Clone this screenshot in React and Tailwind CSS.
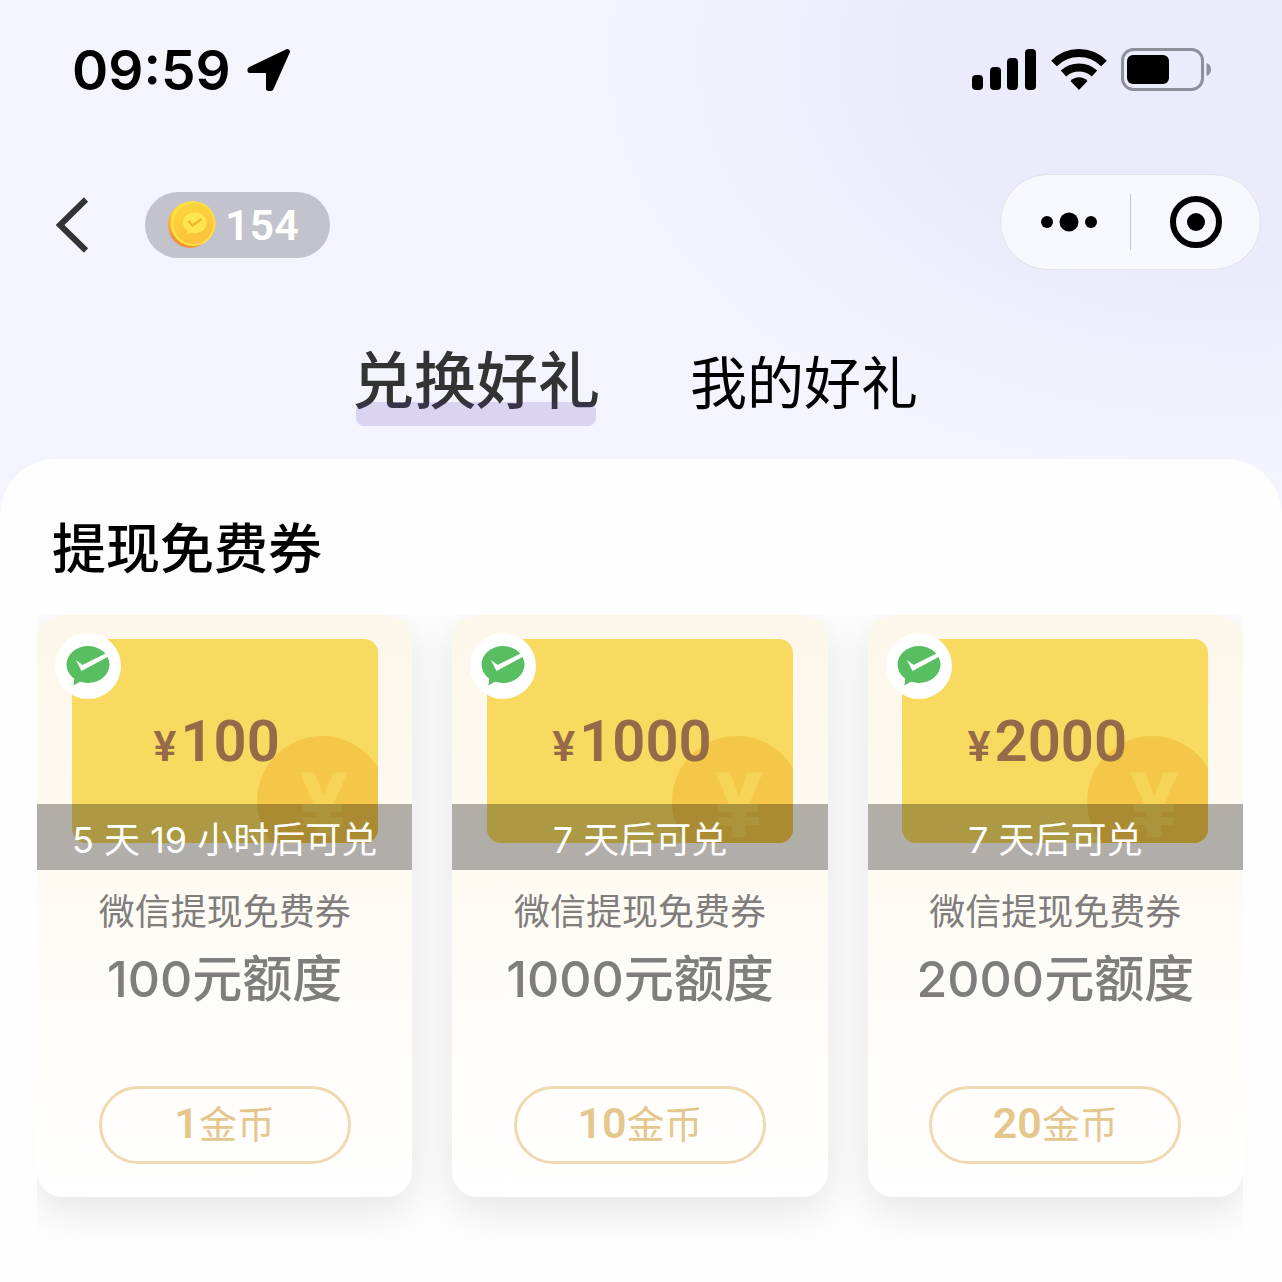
const coupons = [
  { id: 1, amount: 100, cost: 1, wait: '5 天 19 小时后可兑' },
  { id: 2, amount: 1000, cost: 10, wait: '7 天后可兑' },
  { id: 3, amount: 2000, cost: 20, wait: '7 天后可兑' },
];

const LocationIcon = () => (
  <svg width="44" height="44" viewBox="0 0 44 44">
    <path d="M3 21.500 40.500 3.500 24 40.500 21.500 40.500 21.500 22.500 3 22.500Z" fill="#000" stroke="#000" strokeWidth="5" strokeLinejoin="round" />
  </svg>
);

const SignalIcon = () => (
  <svg width="66" height="42" viewBox="0 0 66 42">
    <rect x="1" y="26" width="11" height="15" rx="4" />
    <rect x="19" y="18" width="11" height="23" rx="4" />
    <rect x="36" y="9" width="11" height="32" rx="4" />
    <rect x="54" y="0" width="11" height="41" rx="4" />
  </svg>
);

const WifiIcon = () => (
  <svg width="56" height="42" viewBox="0 0 56 42" fill="none" stroke="#000" strokeWidth="8">
    <path d="M3 14.500C17 .5 39 .5 53 14.500" />
    <path d="M12.500 24.500C21 16.500 35 16.500 43.500 24.500" />
    <path d="M19.500 32C24 27 32 27 36.500 32L28 41Z" fill="#000" stroke="none" />
  </svg>
);

const BatteryIcon = () => (
  <svg width="90" height="44" viewBox="0 0 90 44">
    <rect x="1.500" y="1.500" width="80" height="40" rx="11" fill="none" stroke="#8f8f9c" strokeWidth="3" />
    <rect x="6" y="7" width="42" height="29" rx="6" />
    <path d="M85.500 15c6 2 6 11 0 13Z" fill="#8f8f9c" />
  </svg>
);

const CoinIcon = () => (
  <svg width="50" height="50" viewBox="0 0 50 50">
    <defs>
      <linearGradient id="coinEdge" x1="0.7" y1="0" x2="0.2" y2="1">
        <stop offset="0" stopColor="#fff04a" />
        <stop offset="0.5" stopColor="#fbc02f" />
        <stop offset="1" stopColor="#f0813a" />
      </linearGradient>
      <linearGradient id="coinFace" x1="0" y1="0" x2="0.3" y2="1">
        <stop offset="0" stopColor="#fcd63c" />
        <stop offset="1" stopColor="#fcc23c" />
      </linearGradient>
    </defs>
    <ellipse cx="23" cy="25" rx="22" ry="23" fill="url(#coinEdge)" />
    <ellipse cx="26" cy="23.500" rx="22.500" ry="22.500" fill="#ffdf45" />
    <ellipse cx="26.500" cy="23.500" rx="20" ry="20.500" fill="url(#coinFace)" />
    <path d="M28 12.500c-7 0-12 4-12 10 0 3.500 2 6.500 4.500 8l-.5 4 4-2c8 2.500 15.500-2.500 15.500-10 0-6-5-10-11.500-10Z" fill="#ffe651" />
    <path d="M21.500 21l4 4.500L34.500 19" fill="none" stroke="#f2b531" strokeWidth="2.500" />
  </svg>
);

const WechatPayIcon = () => (
  <svg width="44" height="40" viewBox="0 0 44 40">
    <ellipse cx="22" cy="18.500" rx="21.500" ry="18.500" fill="#57bf60" />
    <path d="M8.500 30 7.500 39.500 15 35Z" fill="#57bf60" />
    <path d="M10 14 16.500 19 38.500 8 44 7 42.500 10.500 15.500 25Z" fill="#fff" />
  </svg>
);

const StatusBar = () => (
  <div className="flex h-[140px] items-center justify-between pl-[72px] pr-[71px]">
    <div className="flex items-center gap-4">
      <span className="text-[55px] font-semibold leading-none text-black [font-family:Inter,sans-serif]">09:59</span>
      <LocationIcon />
    </div>
    <div className="flex items-center gap-[14px]">
      <SignalIcon />
      <WifiIcon />
      <BatteryIcon />
    </div>
  </div>
);

const NavBar = () => (
  <div className="mt-[34px] flex h-24 items-center justify-between pl-[55px] pr-[21px]">
    <div className="flex items-center gap-14 pt-1.5">
      <button type="button" aria-label="返回">
        <svg width="34" height="56" viewBox="0 0 34 56" fill="none" stroke="#333" strokeWidth="6">
          <path d="M31 2.500 5 28 31 53.500" />
        </svg>
      </button>
      <div className="flex h-[66px] w-[185px] items-center gap-2 rounded-full bg-[#c3c3cd] pl-[22px]">
        <CoinIcon />
        <span className="text-[43px] font-semibold leading-none text-white [font-family:Roboto,sans-serif]">154</span>
      </div>
    </div>
    <div className="flex h-24 items-center rounded-full border border-[#e2e2ea] bg-[#f7f8fd]">
      <button type="button" aria-label="更多" className="flex w-[129px] justify-center pl-1.5">
        <svg width="58" height="20" viewBox="0 0 58 20">
          <circle cx="7" cy="10" r="6" />
          <circle cx="29" cy="10" r="9.500" />
          <circle cx="51" cy="10" r="6" />
        </svg>
      </button>
      <div className="h-14 w-px bg-[#c8c8d0]"></div>
      <button type="button" aria-label="关闭" className="flex w-[129px] justify-center">
        <svg width="52" height="52" viewBox="0 0 52 52">
          <circle cx="26" cy="26" r="23" fill="none" stroke="#000" strokeWidth="6" />
          <circle cx="26" cy="26" r="9" />
        </svg>
      </button>
    </div>
  </div>
);

const CouponCard = ({ coupon }) => (
  <div className="relative flex flex-col items-center rounded-[26px] bg-linear-to-b from-[#fdf6ea] via-[#fefbf4] to-white pb-[33px] pt-6 shadow-[0_12px_40px_rgba(0,0,0,0.1)]">
    <div className="relative flex h-[204px] w-[306px] items-center justify-center overflow-hidden rounded-[14px] bg-[#f8da60] pr-4 [font-family:Roboto,sans-serif]">
      <div className="absolute left-[185px] top-[97px] flex size-[130px] items-center justify-center rounded-full bg-[#f5c748] pl-1 pt-3">
        <span className="text-[90px] font-extrabold leading-none text-[#f6d458]">¥</span>
      </div>
      <p className="relative flex items-baseline gap-1 font-semibold leading-none text-[#956a48]">
        <span className="text-[43px]">¥</span>
        <span className="text-[58px]">{coupon.amount}</span>
      </p>
    </div>

    {/* WeChat Pay badge */}
    <div className="absolute left-[18px] top-[18px] flex size-[66px] items-center justify-center rounded-full bg-white">
      <WechatPayIcon />
    </div>

    {/* Countdown strip */}
    <div className="absolute inset-x-0 top-[189px] flex h-[66px] items-center justify-center bg-black/30 pt-1.5 text-[36px] leading-none text-white [font-family:Inter,'Noto_Sans_CJK_SC',sans-serif]">
      {coupon.wait}
    </div>

    <p className="mt-[42px] text-[36px] leading-[48px] text-[#7f7e7c]">微信提现免费券</p>
    <p className="mt-[10px] text-[50px] font-medium leading-[72px] text-[#7f7e7c] [font-family:Inter,'Noto_Sans_CJK_SC',sans-serif]">
      {coupon.amount}元额度
    </p>
    <button
      type="button"
      className="mt-[71px] flex h-[78px] w-[252px] items-baseline justify-center rounded-full border-3 border-[#eed9b0] leading-[66px] text-[#e5c78e]"
    >
      <span className="text-[43px] font-semibold [font-family:Roboto,sans-serif]">{coupon.cost}</span>
      <span className="text-[38px]">金币</span>
    </button>
  </div>
);

const App = () => {
  return (
    <div className="flex min-h-screen flex-col bg-[#f4f4fe] bg-[radial-gradient(ellipse_640px_420px_at_1240px_60px,#eaebfb_50%,#f4f4fe)] [font-family:'Noto_Sans_CJK_SC',sans-serif]">
      <StatusBar />
      <NavBar />

      <div className="flex h-[189px] items-center justify-center pr-3 pt-6">
        <div className="flex items-end gap-[90px]">
          <button type="button" className="relative text-[62px] font-medium leading-none text-[#333]">
            兑换好礼
            <span className="absolute inset-x-1 -bottom-[18px] h-6 rounded-lg bg-[#5b35b0]/17"></span>
          </button>
          <button type="button" className="text-[57px] leading-none text-black">我的好礼</button>
        </div>
      </div>

      <main className="flex-1 rounded-t-[56px] bg-[#fdfdfd] pt-[51px]">
        <h1 className="px-[52px] text-[54px] font-medium leading-[72px] text-black">提现免费券</h1>
        <div className="ml-[37px] mr-[39px] mt-[33px] grid grid-cols-3 gap-10 overflow-hidden pb-11">
          {coupons.map((coupon) => (
            <CouponCard key={coupon.id} coupon={coupon} />
          ))}
        </div>
      </main>
    </div>
  );
};

export default App;
